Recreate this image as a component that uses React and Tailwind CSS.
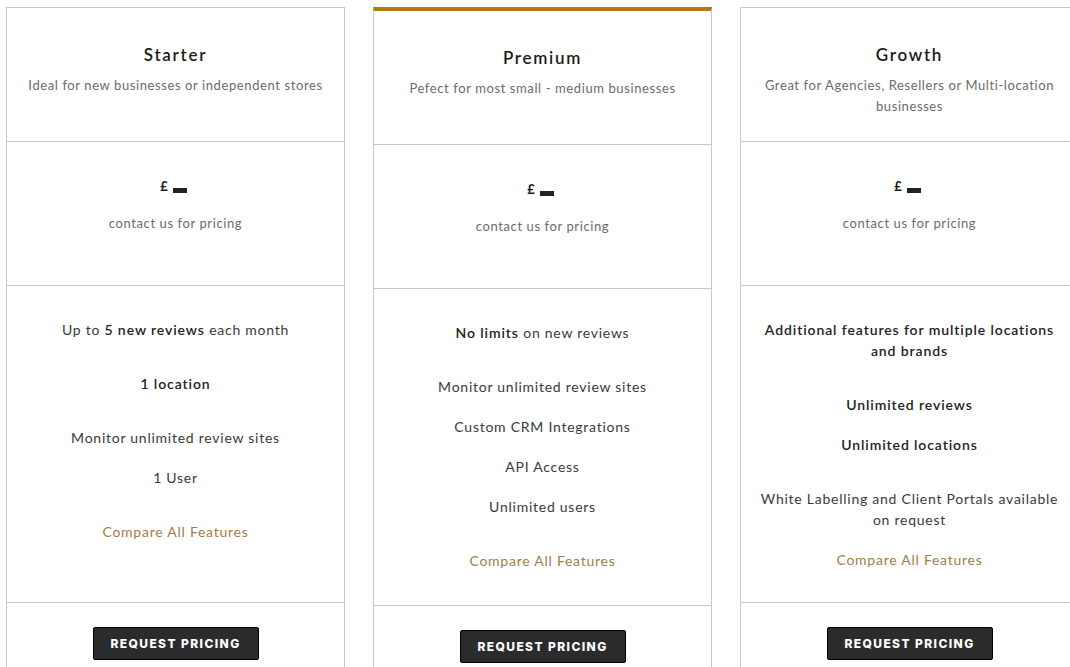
const strong = 'font-semibold tracking-[0.9px] text-[#222]';

const plans = [
    {
        name: 'Starter',
        blurb: ['Ideal for new businesses or independent stores'],
        featured: false,
        features: [
            { gap: 'mt-0', node: <>Up to <b className={strong}>5 new reviews</b> each month</> },
            { gap: 'mt-[33px]', node: <b className={strong}>1 location</b> },
            { gap: 'mt-[33px]', node: <>Monitor unlimited review sites</> },
            { gap: 'mt-[19px]', node: <>1 User</> },
        ],
        compareGap: 'mt-[33px]',
    },
    {
        name: 'Premium',
        blurb: ['Pefect for most small - medium businesses'],
        featured: true,
        features: [
            { gap: 'mt-0', node: <><b className={strong}>No limits</b> on new reviews</> },
            { gap: 'mt-[33px]', node: <>Monitor unlimited review sites</> },
            { gap: 'mt-[19px]', node: <>Custom CRM Integrations</> },
            { gap: 'mt-[19px]', node: <>API Access</> },
            { gap: 'mt-[19px]', node: <>Unlimited users</> },
        ],
        compareGap: 'mt-[33px]',
    },
    {
        name: 'Growth',
        blurb: ['Great for Agencies, Resellers or Multi-location', 'businesses'],
        featured: false,
        features: [
            { gap: 'mt-0', node: <b className={strong}>Additional features for multiple locations<br />and brands</b> },
            { gap: 'mt-[33px]', node: <b className={strong}>Unlimited reviews</b> },
            { gap: 'mt-[19px]', node: <b className={strong}>Unlimited locations</b> },
            { gap: 'mt-[33px]', node: <>White Labelling and Client Portals available<br />on request</> },
        ],
        compareGap: 'mt-[19px]',
    },
];

function PlanCard({ plan }) {
    return (
        <div
            className={
                'flex w-[339px] shrink-0 flex-col border-x border-b border-[#c9c9c9] bg-white ' +
                (plan.featured ? 'border-t-4 border-t-[#b07b14]' : 'border-t')
            }
        >
            <div className="h-[134px] border-b border-[#c9c9c9] px-4 pt-[35px] text-center">
                <h3 className="text-[17px] leading-6 font-semibold tracking-[1.7px] text-[#1a1a1a]">{plan.name}</h3>
                <p className="mt-[8px] text-[13px] leading-[21px] tracking-[0.6px] text-[#6b6b6b]">
                    {plan.blurb.map((line, i) => (
                        <span key={i} className="block">{line}</span>
                    ))}
                </p>
            </div>

            <div className="h-[144px] border-b border-[#c9c9c9] pt-[35px] text-center">
                <div className="flex h-5 items-center justify-center gap-[5px] pr-[4px] text-[13px] font-bold text-[#1a1a1a]">
                    <span>£</span>
                    <span className="mt-[6px] inline-block h-[5px] w-[14px] bg-[#222]" />
                </div>
                <p className="mt-4 text-[13px] leading-[21px] tracking-[0.6px] text-[#6b6b6b]">contact us for pricing</p>
            </div>

            <div className="flex h-[317px] flex-col items-center border-b border-[#c9c9c9] pt-[33px] text-center text-[14px] leading-[21px] tracking-[0.75px] text-[#3a3a3a]">
                {plan.features.map((f, i) => (
                    <div key={i} className={f.gap}>{f.node}</div>
                ))}
                <a href="#" className={plan.compareGap + ' text-[#a47d43]'}>Compare All Features</a>
            </div>

            <div className="flex justify-center pt-6 pb-10">
                <button className="h-[33px] w-[166px] rounded-[2px] border border-black bg-[#2b2b2b] font-['Inter',sans-serif] text-[12px] font-extrabold tracking-[1.4px] text-white">
                    REQUEST PRICING
                </button>
            </div>
        </div>
    );
}

export default function App() {
    return (
        <div className="h-[667px] w-[1070px] overflow-hidden bg-white font-['Lato',sans-serif]">
            <div className="flex gap-[28px] pt-[7px] pl-[6px]">
                {plans.map((plan) => (
                    <PlanCard key={plan.name} plan={plan} />
                ))}
            </div>
        </div>
    );
}
